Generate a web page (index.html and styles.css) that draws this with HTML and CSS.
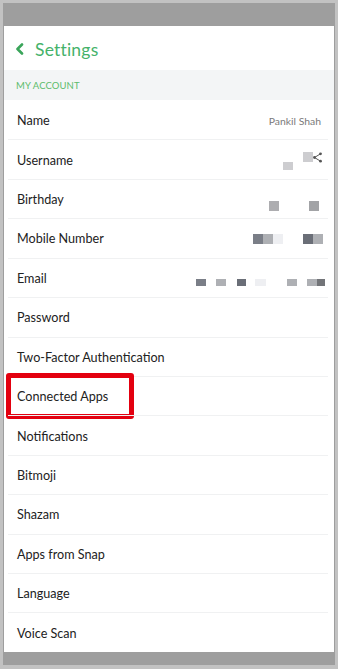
FILE: index.html
```html
<!DOCTYPE html>
<html lang="en">
<head>
<meta charset="utf-8">
<title>Settings</title>
<link rel="stylesheet" href="styles.css">
</head>
<body>
<div class="screen">
  <div class="panel">
    <header class="top">
      <svg class="back" width="9" height="12" viewBox="0 0 9 12"><path d="M7 1.5 L2.5 6 L7 10.5" fill="none" stroke="#3aa55a" stroke-width="2.6" stroke-linecap="round" stroke-linejoin="round"/></svg>
      <span class="title">Settings</span>
    </header>
    <div class="section">MY ACCOUNT</div>
    <div class="list">
      <div class="row"><span class="label">Name</span><span class="value">Pankil Shah</span></div>
      <div class="row sep pr12"><span class="label">Username</span>
        <span class="pix user">
          <span class="c w10 h8 g3 down"></span><span class="c w10 e"></span><span class="c w10 h10 g3"></span>
          <svg class="share" width="9" height="11" viewBox="0 0 9 11"><path d="M7.5 1.8 L1.5 5.5 L7.5 9.2" fill="none" stroke="#555" stroke-width="1"/><circle cx="7.5" cy="1.8" r="1.4" fill="#555"/><circle cx="1.5" cy="5.5" r="1.4" fill="#555"/><circle cx="7.5" cy="9.2" r="1.4" fill="#555"/></svg>
        </span>
      </div>
      <div class="row sep pr15"><span class="label">Birthday</span>
        <span class="pix bday"><span class="c w10 h10 g2b"></span><span class="c w30 e"></span><span class="c w10 h10 g2c"></span></span>
      </div>
      <div class="row sep pr11"><span class="label">Mobile Number</span>
        <span class="pix"><span class="c w10 h10 g1"></span><span class="c w10 h10 g2"></span><span class="c w10 h10 g4"></span><span class="c w20 e"></span><span class="c w10 h10 g1d"></span><span class="c w10 h10 g2"></span></span>
      </div>
      <div class="row sep pr9"><span class="label">Email</span>
        <span class="pix mail"><span class="c w10 h7 g1"></span><span class="c w10 e"></span><span class="c w10 h7 g2"></span><span class="c w11 e"></span><span class="c w9 h7 g1d"></span><span class="c w9 e"></span><span class="c w11 h7 g4"></span><span class="c w21 e"></span><span class="c w10 h7 g2"></span><span class="c w10 e"></span><span class="c w10 h7 g2"></span><span class="c w8 h7 g1e"></span></span>
      </div>
      <div class="row sep"><span class="label">Password</span></div>
      <div class="row sep"><span class="label">Two-Factor Authentication</span></div>
      <div class="row sep hl"><span class="label">Connected Apps</span><span class="mark"></span></div>
      <div class="row sep"><span class="label">Notifications</span></div>
      <div class="row sep"><span class="label">Bitmoji</span></div>
      <div class="row sep"><span class="label">Shazam</span></div>
      <div class="row sep"><span class="label">Apps from Snap</span></div>
      <div class="row sep"><span class="label">Language</span></div>
      <div class="row sep"><span class="label">Voice Scan</span></div>
    </div>
  </div>
</div>
</body>
</html>
```

FILE: styles.css
```css
* { box-sizing: border-box; }
html, body { margin: 0; padding: 0; }
body {
  width: 338px;
  height: 669px;
  font-family: Lato, "Noto Sans", sans-serif;
  background: #c6c6c6;
}
.screen {
  width: 338px;
  height: 669px;
  border: 3px solid #c2c2c2;
  border-bottom-width: 4px;
  background: #9e9e9e;
  padding: 23px 1px 13px 1px;
}
.panel {
  height: 626px;
  background: #fff;
  display: flex;
  flex-direction: column;
}
.top {
  height: 44px;
  flex: none;
  display: flex;
  align-items: center;
  padding-left: 11px;
  padding-top: 2px;
  gap: 11px;
}
.back { display: block; margin-top: 0; }
.title {
  color: #45b26a;
  font-size: 17.5px;
  letter-spacing: 0.2px;
}
.section {
  height: 30px;
  flex: none;
  background: #f3f5f6;
  color: #5cbc6c;
  font-size: 9.5px;
  display: flex;
  align-items: center;
  padding-left: 12px;
  padding-top: 1px;
  letter-spacing: 0.1px;
}
.list {
  flex: 1;
  display: flex;
  flex-direction: column;
}
.row {
  flex: 1;
  display: flex;
  align-items: center;
  justify-content: space-between;
  padding: 2px 13px 0 13px;
  position: relative;
}
.row.sep::before {
  content: "";
  position: absolute;
  left: 4px;
  right: 6px;
  top: 0;
  height: 1px;
  background: #f0f1f2;
}
.label {
  color: #222;
  font-size: 12.6px;
}
.value {
  color: #7a7a7a;
  font-size: 10.4px;
}
.pr12 { padding-right: 12px; }
.pr15 { padding-right: 15px; }
.pr11 { padding-right: 11px; }
.pr9 { padding-right: 9px; }
.pix {
  display: flex;
  align-items: flex-start;
}
.pix.user { height: 20px; margin-top: 4px; }
.pix.bday { margin-top: 12px; }
.pix.mail { margin-top: 8px; }
.c { display: block; flex: none; }
.down { margin-top: 10px; }
.share { display: block; flex: none; margin-top: 0; }
.w8 { width: 8px; } .w9 { width: 9px; } .w10 { width: 10px; } .w11 { width: 11px; }
.w20 { width: 20px; } .w21 { width: 21px; } .w30 { width: 30px; }
.h7 { height: 7px; } .h8 { height: 8px; } .h10 { height: 10px; }
.e { height: 1px; }
.g1 { background: #7a7e87; }
.g1d { background: #6a6e77; }
.g1e { background: #727478; }
.g2 { background: #aeb0b4; }
.g2b { background: #adadb0; }
.g2c { background: #a2a3a6; }
.g3 { background: #cdcdd0; }
.g4 { background: #eeeff2; }
.mark {
  position: absolute;
  left: 2px;
  top: -3px;
  width: 128px;
  height: 46px;
  border: 5px solid #e3000f;
  border-radius: 3px;
}
```
